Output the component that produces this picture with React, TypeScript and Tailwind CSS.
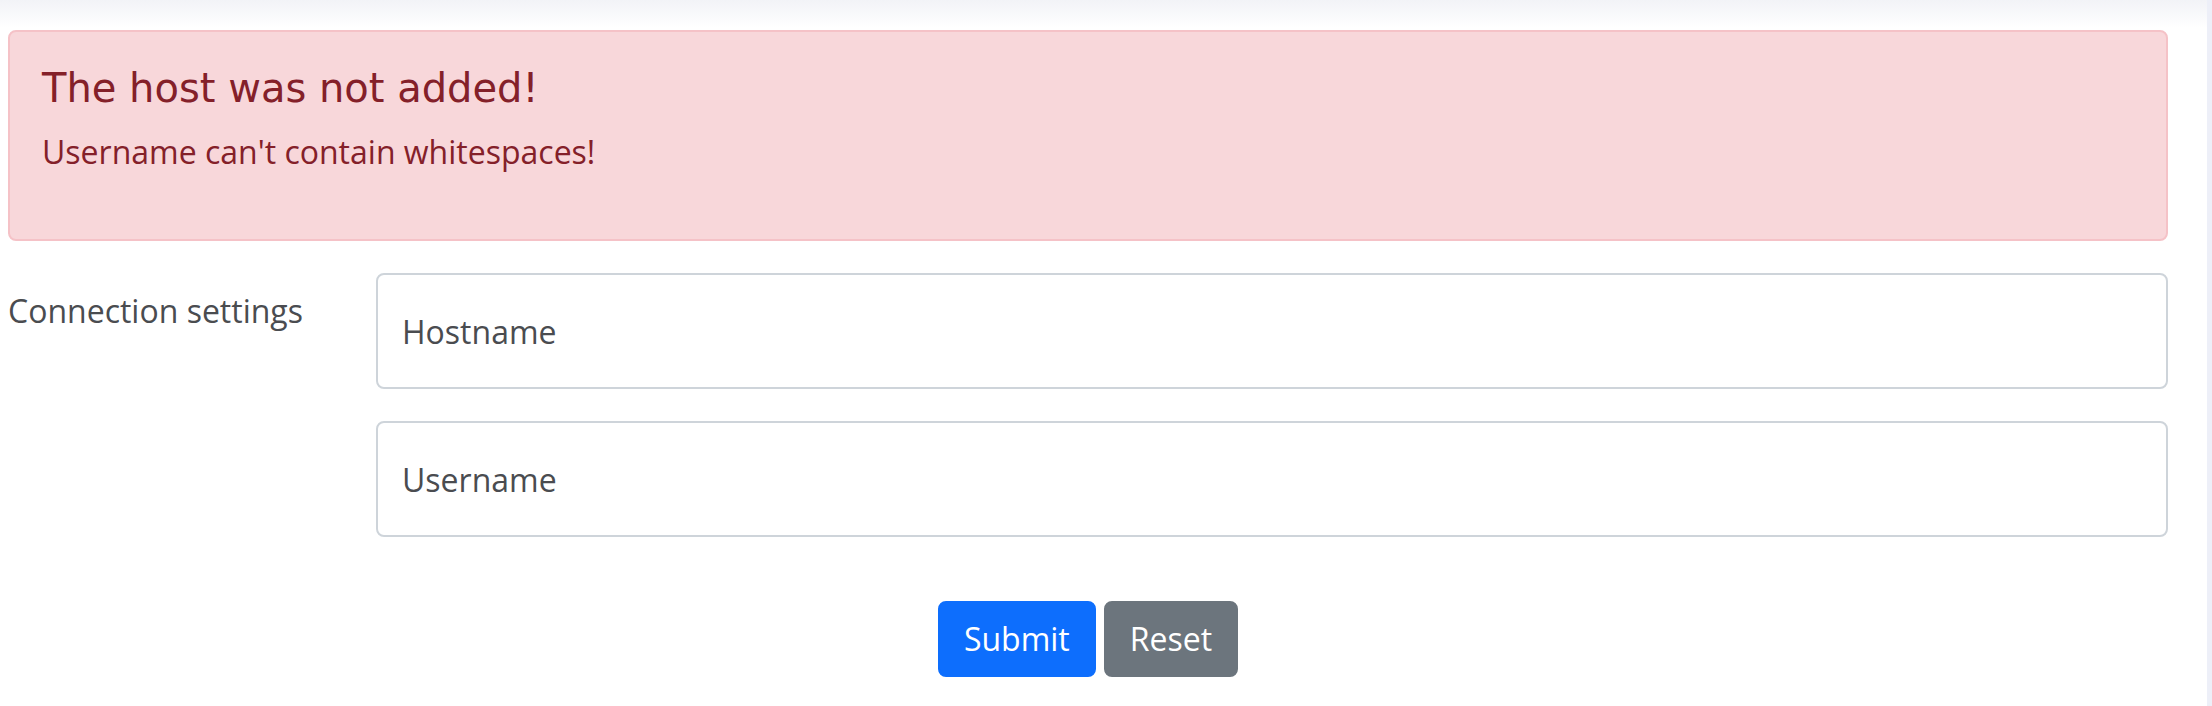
import React from 'react';

const sans = "font-['Open_Sans',sans-serif]";

export default function App() {
  return (
    <div className={`flex h-[706px] w-full overflow-hidden bg-white ${sans}`}>
      <main className="flex-1 bg-[linear-gradient(to_bottom,#f2f3f7,#ffffff_28px)] pl-[8px] pr-[39px] pt-[30px]">
        <div className="rounded-[8px] border-2 border-[#f5c2c7] bg-[#f8d7da] px-[32px] pt-[32px] pb-[31px] text-[#842029]">
          <h5 className="mb-[16px] font-['DejaVu_Sans',sans-serif] text-[40px] leading-[1.2]">The host was not added!</h5>
          <p className="mb-[32px] text-[32px] leading-[1.5]">Username can't contain whitespaces!</p>
        </div>

        <form className="mt-[32px]" onSubmit={(e) => e.preventDefault()}>
          <div className="flex gap-[48px]">
            <label className="w-[320px] shrink-0 pt-[14px] text-[32px] leading-[1.5] text-[#4a4c50]">
              Connection settings
            </label>
            <div className="flex flex-1 flex-col gap-[32px]">
              <input
                type="text"
                placeholder="Hostname"
                className="h-[116px] w-full rounded-[8px] border-2 border-[#ced4da] bg-white px-[24px] text-[32px] text-[#212529] outline-none placeholder:text-[#4a4c50]"
              />
              <input
                type="text"
                placeholder="Username"
                className="h-[116px] w-full rounded-[8px] border-2 border-[#ced4da] bg-white px-[24px] text-[32px] text-[#212529] outline-none placeholder:text-[#4a4c50]"
              />
            </div>
          </div>

          <div className="mt-[64px] flex justify-center gap-[8px]">
            <button
              type="submit"
              className="rounded-[8px] border-2 border-[#0d6efd] bg-[#0d6efd] px-[24px] py-[12px] text-[32px] leading-[1.5] text-white"
            >
              Submit
            </button>
            <button
              type="reset"
              className="rounded-[8px] border-2 border-[#6c757d] bg-[#6c757d] px-[24px] py-[12px] text-[32px] leading-[1.5] text-white"
            >
              Reset
            </button>
          </div>
        </form>
      </main>
      <aside className="w-[5px] shrink-0 bg-[#edeff8]" />
    </div>
  );
}
